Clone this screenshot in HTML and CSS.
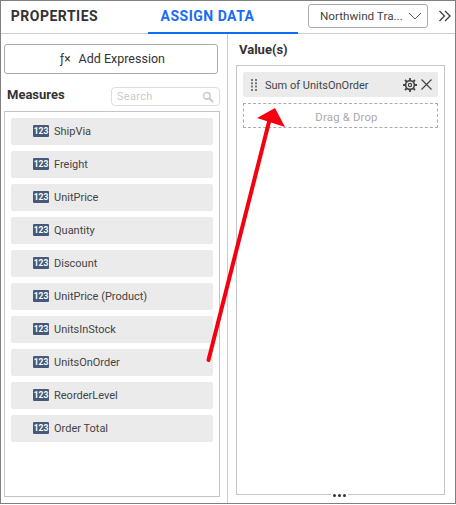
FILE: index.html
```html
<!DOCTYPE html>
<html lang="en">
<head>
  <meta charset="UTF-8">
  <title>Assign Data</title>
  <link rel="stylesheet" href="styles.css">
</head>
<body>
  <div class="panel">
    <div class="header">
      <div class="tab">PROPERTIES</div>
      <div class="tab active">ASSIGN DATA</div>
      <div class="source">
        <span>Northwind Tra...</span>
        <svg width="14" height="8" viewBox="0 0 14 8"><path d="M1 1l6 6 6-6" fill="none" stroke="#555" stroke-width="1"/></svg>
      </div>
      <svg class="collapse" width="12" height="12" viewBox="0 0 12 12"><path d="M.5 1l5 5-5 5M6 1l5 5-5 5" fill="none" stroke="#444" stroke-width="1.4"/></svg>
    </div>

    <div class="content">
      <div class="left">
        <button class="add-expression"><span class="fx">ƒ×</span>Add Expression</button>
        <div class="measures-head">
          <div class="title measures-title">Measures</div>
          <div class="search">
            <span>Search</span>
            <svg width="12" height="12" viewBox="0 0 12 12"><circle cx="4.8" cy="4.8" r="3.3" fill="none" stroke="#ccc" stroke-width="1.6"/><path d="M7.4 7.4l3.6 3.6" stroke="#ccc" stroke-width="2.2"/></svg>
          </div>
        </div>
        <div class="measures">
          <div class="measure"><span class="num">123</span>ShipVia</div>
          <div class="measure"><span class="num">123</span>Freight</div>
          <div class="measure"><span class="num">123</span>UnitPrice</div>
          <div class="measure"><span class="num">123</span>Quantity</div>
          <div class="measure"><span class="num">123</span>Discount</div>
          <div class="measure"><span class="num">123</span>UnitPrice (Product)</div>
          <div class="measure"><span class="num">123</span>UnitsInStock</div>
          <div class="measure"><span class="num">123</span>UnitsOnOrder</div>
          <div class="measure"><span class="num">123</span>ReorderLevel</div>
          <div class="measure"><span class="num">123</span>Order Total</div>
        </div>
      </div>

      <div class="right">
        <div class="title values-title">Value(s)</div>
        <div class="values">
          <div class="value-item">
            <svg class="grip" width="6" height="12" viewBox="0 0 6 12"><path d="M0 0h2v2H0zM4 0h2v2H4zM0 3.3h2v2H0zM4 3.3h2v2H4zM0 6.6h2v2H0zM4 6.6h2v2H4zM0 10h2v2H0zM4 10h2v2H4z" fill="#777"/></svg>
            <span class="value-name">Sum of UnitsOnOrder</span>
            <svg class="gear" width="14" height="14" viewBox="0 0 14 14"><circle cx="7" cy="7" r="4.4" fill="none" stroke="#444" stroke-width="1.6"/><circle cx="7" cy="7" r="1.6" fill="none" stroke="#444" stroke-width="1.2"/><path d="M7 0v2.6M7 11.4V14M0 7h2.6M11.4 7H14M2 2l1.900 1.900M10.100 10.100L12 12M12 2l-1.900 1.900M3.900 10.100L2 12" stroke="#444" stroke-width="1.8"/></svg>
            <svg class="close" width="11" height="11" viewBox="0 0 11 11"><path d="M.5.5l10 10M10.500.5l-10 10" stroke="#444" stroke-width="1.200"/></svg>
          </div>
          <div class="drop">Drag &amp; Drop</div>
          <div class="dots"><i></i><i></i><i></i></div>
        </div>
      </div>
    </div>

    <!-- annotation arrow on top of the panel -->
    <svg class="arrow" width="456" height="505" viewBox="0 0 456 505">
      <path d="M208.500 360L270 118" stroke="#f40010" stroke-width="4" stroke-linecap="round" fill="none"/>
      <path d="M275 108L257 118L285 127Z" fill="#f40010"/>
    </svg>
  </div>
</body>
</html>
```

FILE: styles.css
```css
* {
  box-sizing: border-box;
}

body {
  margin: 0;
  background: #fff;
  font-family: Roboto, sans-serif;
  color: #333;
}

.panel {
  position: relative;
  width: 456px;
  height: 504px;
  border: 1px solid #808080;
  background: #fff;
  display: flex;
  flex-direction: column;
}

/* Header */
.header {
  height: 33px;
  display: flex;
  align-items: center;
  border-bottom: 1px solid #ccc;
  flex-shrink: 0;
}

.tab {
  height: 33px;
  font-size: 14px;
  font-weight: 700;
  letter-spacing: 0.5px;
  line-height: 30px;
  text-align: center;
  color: #333;
  width: 147px;
  padding-right: 40px;
}

.tab.active {
  width: 150px;
  padding-right: 31px;
  color: #1a6cf5;
  border-bottom: 2px solid #0f6cf5;
}

.source {
  width: 120px;
  height: 24px;
  margin-left: 10px;
  margin-top: -2px;
  padding: 0 0 0 11px;
  border: 1px solid #aaa;
  border-radius: 3px;
  display: flex;
  align-items: center;
  justify-content: space-between;
  font-size: 11.700px;
  white-space: nowrap;
  color: #444;
}

.source svg {
  margin-right: 5px;
}

.collapse {
  margin-left: 11px;
  margin-top: -2px;
}

/* Body columns */
.content {
  flex: 1;
  display: flex;
  min-height: 0;
}

.left {
  width: 227px;
  padding: 10px 7px 6px 3px;
  border-right: 1px solid #ccc;
  display: flex;
  flex-direction: column;
}

.add-expression {
  width: 214px;
  height: 30px;
  border: 1px solid #aaa;
  border-radius: 3px;
  background: #fff;
  font-family: Roboto, sans-serif;
  font-size: 12.500px;
  color: #333;
  padding: 0 0 2px 3px;
}

.fx {
  margin-right: 8px;
  font-size: 12px;
}

.title {
  font-size: 13px;
  font-weight: 700;
  color: #333;
}

.measures-head {
  display: flex;
  align-items: center;
  justify-content: space-between;
  padding-left: 3px;
  margin-top: 13px;
  height: 19px;
}

.measures-title {
  padding-bottom: 3px;
  line-height: 14px;
}

.search {
  width: 109px;
  height: 19px;
  border: 1px solid #ddd;
  border-radius: 4px;
  padding: 0 5px;
  display: flex;
  align-items: center;
  justify-content: space-between;
  font-size: 11px;
  letter-spacing: 0.3px;
  color: #ccc;
}

.measures {
  flex: 1;
  margin-top: 5px;
  border: 1px solid #c4c4c4;
  padding: 6px;
  display: flex;
  flex-direction: column;
  gap: 6px;
}

.measure {
  height: 27px;
  flex-shrink: 0;
  background: #ebebeb;
  border-radius: 2px;
  padding-left: 22px;
  display: flex;
  align-items: center;
  font-size: 11px;
  color: #444;
}

.num {
  width: 16px;
  height: 12px;
  margin-right: 5px;
  margin-bottom: 1px;
  background: #47597a;
  border-radius: 1px;
  color: #fff;
  font-size: 8.500px;
  font-weight: 700;
  line-height: 12px;
  text-align: center;
}

.right {
  flex: 1;
  padding: 0 10px 8px 8px;
  display: flex;
  flex-direction: column;
}

.values-title {
  margin-top: 8px;
  padding-left: 3px;
  height: 23px;
  line-height: 16px;
}

.values {
  flex: 1;
  position: relative;
  border: 1px solid #c4c4c4;
  padding: 6px;
  display: flex;
  flex-direction: column;
  gap: 6px;
}

.value-item {
  height: 25px;
  background: #ebebeb;
  border-radius: 2px;
  padding: 0 6px 0 8px;
  display: flex;
  align-items: center;
  font-size: 11px;
  color: #444;
}

.grip {
  margin-right: 8px;
}

.value-name {
  flex: 1;
  padding-top: 1px;
}

.close {
  margin-left: 4px;
}

.drop {
  height: 25px;
  border: 1px dashed #aaa;
  padding-left: 12px;
  text-align: center;
  line-height: 27px;
  font-size: 11.300px;
  letter-spacing: 0.2px;
  color: #aaa;
}

.dots {
  position: absolute;
  left: 94px;
  bottom: -3px;
  padding: 0 2px;
  background: #fff;
  display: flex;
  gap: 2px;
}

.dots i {
  width: 3px;
  height: 3px;
  border-radius: 50%;
  background: #333;
}

.arrow {
  position: absolute;
  left: -1px;
  top: -1px;
  pointer-events: none;
}
```
